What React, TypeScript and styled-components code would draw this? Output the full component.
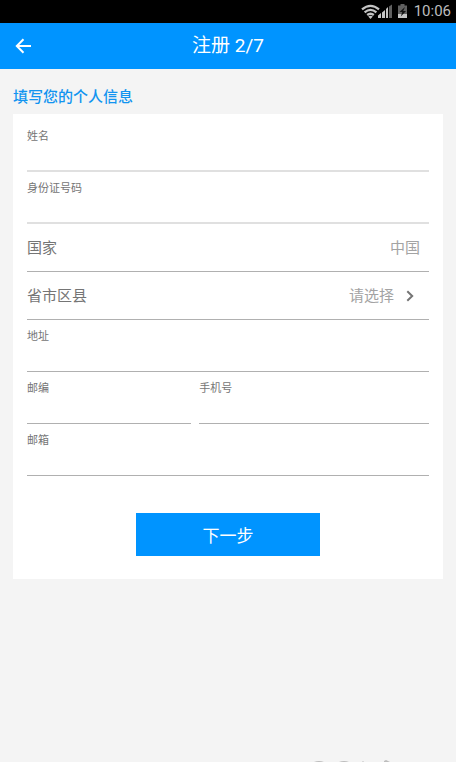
import React from "react";
import styled, { createGlobalStyle } from "styled-components";

const GlobalStyle = createGlobalStyle`
  * { box-sizing: border-box; }
  body {
    margin: 0;
    background: #f4f4f4;
    font-family: Roboto, "Noto Sans CJK SC", sans-serif;
    color: #757575;
  }
  button, input { font-family: inherit; }
`;

const Screen = styled.div`
  display: flex;
  flex-direction: column;
  min-height: 100vh;
`;

const StatusBar = styled.div`
  display: flex;
  align-items: center;
  justify-content: flex-end;
  height: 23px;
  padding-right: 5px;
  background: #000;
  color: #bdbdbd;
  font-size: 15px;
  line-height: 23px;
`;

const StatusIcons = styled.svg`
  display: block;
  margin-right: 5px;
`;

const AppBar = styled.header`
  display: grid;
  grid-template-columns: 48px 1fr 48px;
  align-items: center;
  height: 46px;
  background: #0094ff;
  color: #fff;
`;

const BackButton = styled.button`
  display: flex;
  align-items: center;
  height: 46px;
  padding: 0 0 0 15px;
  border: 0;
  background: none;
  color: inherit;
`;

const Title = styled.h1`
  margin: 0;
  font-size: 19px;
  font-weight: 400;
  line-height: 44px;
  text-align: center;
`;

const Main = styled.main`
  flex: 1;
  padding: 18px 13px 0;
`;

const SectionTitle = styled.h2`
  margin: 0 0 7px;
  font-size: 15px;
  font-weight: 500;
  line-height: 20px;
  color: #1294f0;
`;

const Card = styled.form`
  display: flex;
  flex-direction: column;
  padding: 6px 14px 23px;
  background: #fff;
`;

const FieldBox = styled.label<{ $faint?: boolean }>`
  display: flex;
  flex-direction: column;
  height: 52px;
  padding-top: 9px;
  border-bottom: ${(p) => (p.$faint ? "2px solid #e0e0e0" : "1px solid #b0b0b0")};
  font-size: 11px;
  line-height: 16px;
`;

const TextInput = styled.input`
  flex: 1;
  width: 100%;
  min-height: 0;
  padding: 0;
  border: 0;
  outline: 0;
  background: none;
  color: #444;
  font-size: 15px;
`;

const FieldPair = styled.div`
  display: grid;
  grid-template-columns: 5fr 7fr;
  gap: 8px;
`;

const Row = styled.div`
  display: flex;
  align-items: center;
  justify-content: space-between;
  height: 48px;
  border-bottom: 1px solid #b0b0b0;
  font-size: 15px;
  line-height: 20px;
`;

const RowValue = styled.span`
  padding-right: 9px;
  color: #a3a3a3;
`;

const PickerButton = styled.button`
  display: flex;
  align-items: center;
  gap: 12px;
  padding: 0 15px 0 0;
  border: 0;
  background: none;
  color: #a3a3a3;
  font-size: 15px;
  line-height: 20px;
`;

const SubmitButton = styled.button`
  align-self: center;
  width: 46%;
  height: 43px;
  margin-top: 37px;
  padding: 2px 0 0;
  border: 0;
  background: #0094ff;
  color: #fff;
  font-size: 17px;
  font-weight: 400;
  line-height: 24px;
`;

const Footer = styled.footer`
  display: flex;
  justify-content: flex-end;
  height: 2px;
  padding-right: 54px;
`;

function Field({ label, name, type = "text", faint }: { label: string; name: string; type?: string; faint?: boolean }) {
  return (
    <FieldBox $faint={faint}>
      {label}
      <TextInput name={name} type={type} />
    </FieldBox>
  );
}

export default function App() {
  return (
    <Screen>
      <GlobalStyle />
      <StatusBar>
        <StatusIcons width="48" height="16" viewBox="0 0 48 16" aria-hidden="true">
          <g fill="none" stroke="#c4c4c4" strokeWidth="2.300">
            <path d="M1 5.400Q9.500 -1.600 18 5.400" />
            <path d="M3.600 8.300Q9.500 3.400 15.400 8.300" />
            <path d="M6.200 11Q9.500 8.400 12.800 11" />
          </g>
          <path d="M7.200 12.400Q9.500 10.900 11.800 12.400L9.500 15Z" fill="#c4c4c4" />
          <path d="M17 14v-2.500l3-2.500V14zM21 14V8.500l3-2.500V14zM25 14V5l2-2V14z" fill="#c4c4c4" />
          <path d="M28 14V2.500L31 .500V14z" fill="#606060" />
          <path d="M39.500 0h4v1.500H46V14h-9V1.500h2.500z" fill="#606060" />
          <path d="M37 10h9v4h-9z" fill="#c4c4c4" />
          <path d="M44 3 38.500 8h2.800l-1.500 4.500L45 7h-2.800z" fill="#111" />
        </StatusIcons>
        <span>10:06</span>
      </StatusBar>
      <AppBar>
        <BackButton type="button" aria-label="返回">
          <svg width="17" height="16" viewBox="0 0 17 16" fill="none" stroke="currentColor" strokeWidth="2">
            <path d="M16 8H2M8.500 1.300 1.800 8l6.700 6.700" />
          </svg>
        </BackButton>
        <Title>注册 2/7</Title>
      </AppBar>
      <Main>
        <SectionTitle>填写您的个人信息</SectionTitle>
        <Card>
          <Field label="姓名" name="name" faint />
          <Field label="身份证号码" name="idNumber" faint />
          <Row>
            <span>国家</span>
            <RowValue>中国</RowValue>
          </Row>
          <Row>
            <span id="region-label">省市区县</span>
            <PickerButton type="button" aria-describedby="region-label">
              请选择
              <svg width="8" height="12" viewBox="0 0 8 12" fill="none" stroke="#757575" strokeWidth="2">
                <path d="M1.300 1.200 6.200 6l-4.900 4.800" />
              </svg>
            </PickerButton>
          </Row>
          <Field label="地址" name="address" />
          <FieldPair>
            <Field label="邮编" name="postcode" />
            <Field label="手机号" name="phone" type="tel" />
          </FieldPair>
          <Field label="邮箱" name="email" type="email" />
          <SubmitButton type="submit">下一步</SubmitButton>
        </Card>
      </Main>
      <Footer aria-hidden="true">
        <svg width="90" height="2" viewBox="0 0 90 2" fill="#bdbdbd">
          <path d="M2 2Q7 0 12 2zM27 2Q32 0 37 2zM50 2l1-1 1 1zM72 2V1l2-1 4 2z" />
        </svg>
      </Footer>
    </Screen>
  );
}
